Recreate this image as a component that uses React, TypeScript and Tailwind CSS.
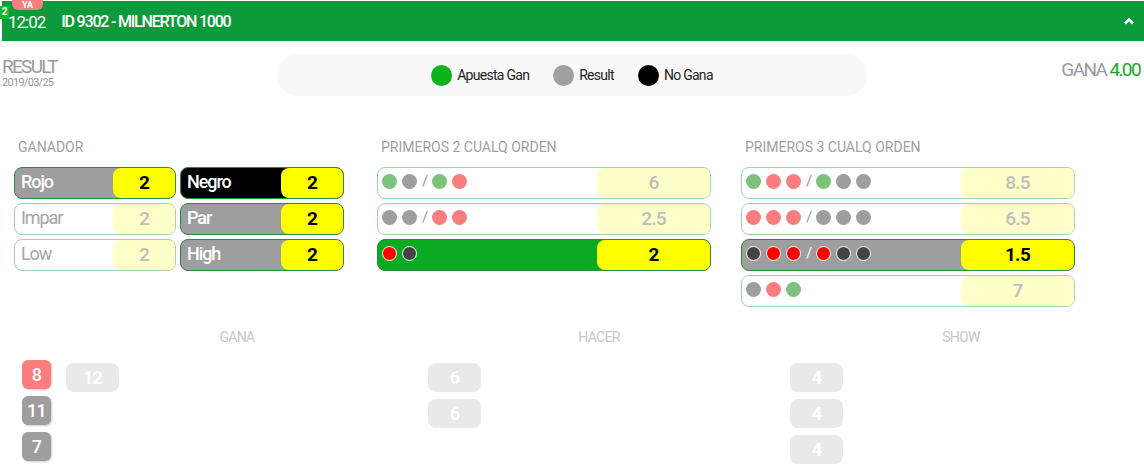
import React from "react";

const FONT = "font-['Roboto',sans-serif] tracking-[-0.045em]";

type Dot = "g" | "r" | "s" | "R" | "k";

const DOT: Record<Dot, string> = {
  g: "bg-[#7cc27d]",
  s: "bg-[#9e9e9e]",
  r: "bg-[#fa7e7e]",
  R: "bg-[#ff0000] border border-white",
  k: "bg-[#444444] border border-white",
};

interface CellProps {
  label?: string;
  dots?: Dot[][];
  value: string;
  state: "off" | "gray" | "black" | "green";
  valueWidth: string;
}

const Cell = ({ label, dots, value, state, valueWidth }: CellProps) => {
  const on = state !== "off";
  const bg =
    state === "gray"
      ? "bg-[#9e9e9e]"
      : state === "black"
        ? "bg-black"
        : state === "green"
          ? "bg-[#0aab23]"
          : "bg-white";
  return (
    <div
      className={`h-8 flex items-stretch rounded-lg overflow-hidden border ${bg} ${
        on ? "border-[#2b8b3c]" : "border-[#9fd3aa]"
      }`}
    >
      <div className={`flex-1 flex items-center ${dots ? "pl-[4px]" : "pl-[6px]"}`}>
        {label && (
          <span
            className={`text-[18px] leading-none -mt-[2px] tracking-[-0.06em] ${
              on ? "text-white font-medium" : "text-[#a5a5a5]"
            }`}
          >
            {label}
          </span>
        )}
        {dots && (
          <div className="flex items-center gap-[5px] -mt-[3px]">
            {dots.map((group, gi) => (
              <React.Fragment key={gi}>
                {gi > 0 && (
                  <span className={`text-[15px] leading-none ${on ? "text-white" : "text-[#999]"}`}>/</span>
                )}
                {group.map((d, i) => (
                  <span key={i} className={`w-[15px] h-[15px] rounded-full ${DOT[d]}`} />
                ))}
              </React.Fragment>
            ))}
          </div>
        )}
      </div>
      <div
        className={`${valueWidth} rounded-l-lg flex items-center justify-center text-[19px] ${
          on ? "bg-[#ffff00] text-black font-bold" : "bg-[#ffffc9] text-[#bdbdbd] font-medium"
        }`}
      >
        {value}
      </div>
    </div>
  );
};

const SectionLabel = ({ children }: { children: React.ReactNode }) => (
  <p className="text-[14px] text-[#a0a0a0] pl-[4px] h-[20px] mb-[10px] leading-[20px] tracking-normal">
    {children}
  </p>
);

const Pill = ({ children }: { children: React.ReactNode }) => (
  <div className="w-[53px] h-[29px] rounded-lg bg-[#e9e9e9] text-white font-bold text-[18px] flex items-center justify-center">
    {children}
  </div>
);

const Badge = ({ n, color }: { n: string; color: string }) => (
  <div
    className={`w-[29px] h-[29px] rounded-md ${color} text-white text-[18px] font-medium flex items-center justify-center shadow-[1px_1px_2px_rgba(0,0,0,0.2)]`}
  >
    {n}
  </div>
);

export default function App() {
  return (
    <div className={`${FONT} w-[1144px] h-[467px] bg-white overflow-hidden`}>
      {/* Header */}
      <div className="relative mt-[1px] ml-[2px] h-[40px] bg-[#0c9a3a] flex items-center text-white">
        <span className="absolute -left-[2px] top-[5px] w-[9px] h-[13px] bg-[#12b82b] text-[10px] font-bold leading-[12px] text-center tracking-normal">
          2
        </span>
        <span className="absolute left-[10px] -top-[1px] w-[31px] h-[10px] bg-[#f47f7f] rounded-b-md text-[9px] leading-[10px] text-center font-bold tracking-normal">
          YA
        </span>
        <span className="ml-[6px] mt-[3px] text-[17px] tracking-[-0.06em]">12:02</span>
        <span className="ml-[16px] mt-[1px] text-[16px] font-medium tracking-[-0.075em]">ID 9302 - MILNERTON 1000</span>
        <svg className="ml-auto mr-[9px] w-[12px] h-[12px]" viewBox="0 0 12 12">
          <path d="M2 8.5 L6 4.5 L10 8.5" fill="none" stroke="white" strokeWidth="2.6" />
        </svg>
      </div>

      {/* Result row */}
      <div className="flex items-start px-[2px] mt-[13px] h-[42px]">
        <div className="w-[275px] leading-none">
          <p className="text-[19px] text-[#9a9a9a] mt-[3px] tracking-[-0.09em]">RESULT</p>
          <p className="text-[11px] text-[#9a9a9a] mt-[1px]">2019/03/25</p>
        </div>
        <div className="w-[590px] h-[42px] rounded-full bg-[#f8f8f8] flex items-center justify-center gap-[24px] text-[14px] text-[#222]">
          <div className="flex items-center gap-[5px]">
            <span className="w-[21px] h-[21px] rounded-full bg-[#0cb31c]" />
            Apuesta Gan
          </div>
          <div className="flex items-center gap-[5px]">
            <span className="w-[21px] h-[21px] rounded-full bg-[#a0a0a0]" />
            Result
          </div>
          <div className="flex items-center gap-[5px]">
            <span className="w-[21px] h-[21px] rounded-full bg-black" />
            No Gana
          </div>
        </div>
        <div className="ml-auto mr-[2px] text-[19px] mt-[2px] tracking-[-0.085em]">
          <span className="text-[#9a9a9a]">GANA </span>
          <span className="text-[#19a72a]">4.00</span>
        </div>
      </div>

      {/* Bet sections */}
      <div className="flex gap-[30px] pl-[14px] mt-[41px] items-start">
        <div className="w-[333px]">
          <SectionLabel>GANADOR</SectionLabel>
          <div className="grid grid-cols-[162px_164px] gap-x-[4px] gap-y-[4px]">
            <Cell label="Rojo" value="2" state="gray" valueWidth="w-[62px]" />
            <Cell label="Negro" value="2" state="black" valueWidth="w-[62px]" />
            <Cell label="Impar" value="2" state="off" valueWidth="w-[62px]" />
            <Cell label="Par" value="2" state="gray" valueWidth="w-[62px]" />
            <Cell label="Low" value="2" state="off" valueWidth="w-[62px]" />
            <Cell label="High" value="2" state="gray" valueWidth="w-[62px]" />
          </div>
        </div>
        <div className="w-[334px]">
          <SectionLabel>PRIMEROS 2 CUALQ ORDEN</SectionLabel>
          <div className="flex flex-col gap-[4px]">
            <Cell dots={[["g", "s"], ["g", "r"]]} value="6" state="off" valueWidth="w-[113px]" />
            <Cell dots={[["s", "s"], ["r", "r"]]} value="2.5" state="off" valueWidth="w-[113px]" />
            <Cell dots={[["R", "k"]]} value="2" state="green" valueWidth="w-[113px]" />
          </div>
        </div>
        <div className="w-[334px]">
          <SectionLabel>PRIMEROS 3 CUALQ ORDEN</SectionLabel>
          <div className="flex flex-col gap-[4px]">
            <Cell dots={[["g", "r", "r"], ["g", "s", "s"]]} value="8.5" state="off" valueWidth="w-[113px]" />
            <Cell dots={[["r", "r", "r"], ["s", "s", "s"]]} value="6.5" state="off" valueWidth="w-[113px]" />
            <Cell dots={[["k", "R", "R"], ["R", "k", "k"]]} value="1.5" state="gray" valueWidth="w-[113px]" />
            <Cell dots={[["s", "r", "g"]]} value="7" state="off" valueWidth="w-[113px]" />
          </div>
        </div>
      </div>

      {/* Results */}
      <div className="flex mt-[20px]">
        <div className="w-[56px] pl-[22px] pt-[33px] flex flex-col gap-[7px]">
          <Badge n="8" color="bg-[#fa7e7e]" />
          <Badge n="11" color="bg-[#9e9e9e]" />
          <Badge n="7" color="bg-[#9e9e9e]" />
        </div>
        {[
          { t: "GANA", v: ["12"] },
          { t: "HACER", v: ["6", "6"] },
          { t: "SHOW", v: ["4", "4", "4"] },
        ].map((c) => (
          <div key={c.t} className="w-[362px]">
            <p className="text-center text-[14px] text-[#c8c8c8] h-[20px] leading-[20px]">{c.t}</p>
            <div className="pl-[10px] mt-[16px] flex flex-col gap-[7px]">
              {c.v.map((v, i) => (
                <Pill key={i}>{v}</Pill>
              ))}
            </div>
          </div>
        ))}
      </div>
    </div>
  );
}
